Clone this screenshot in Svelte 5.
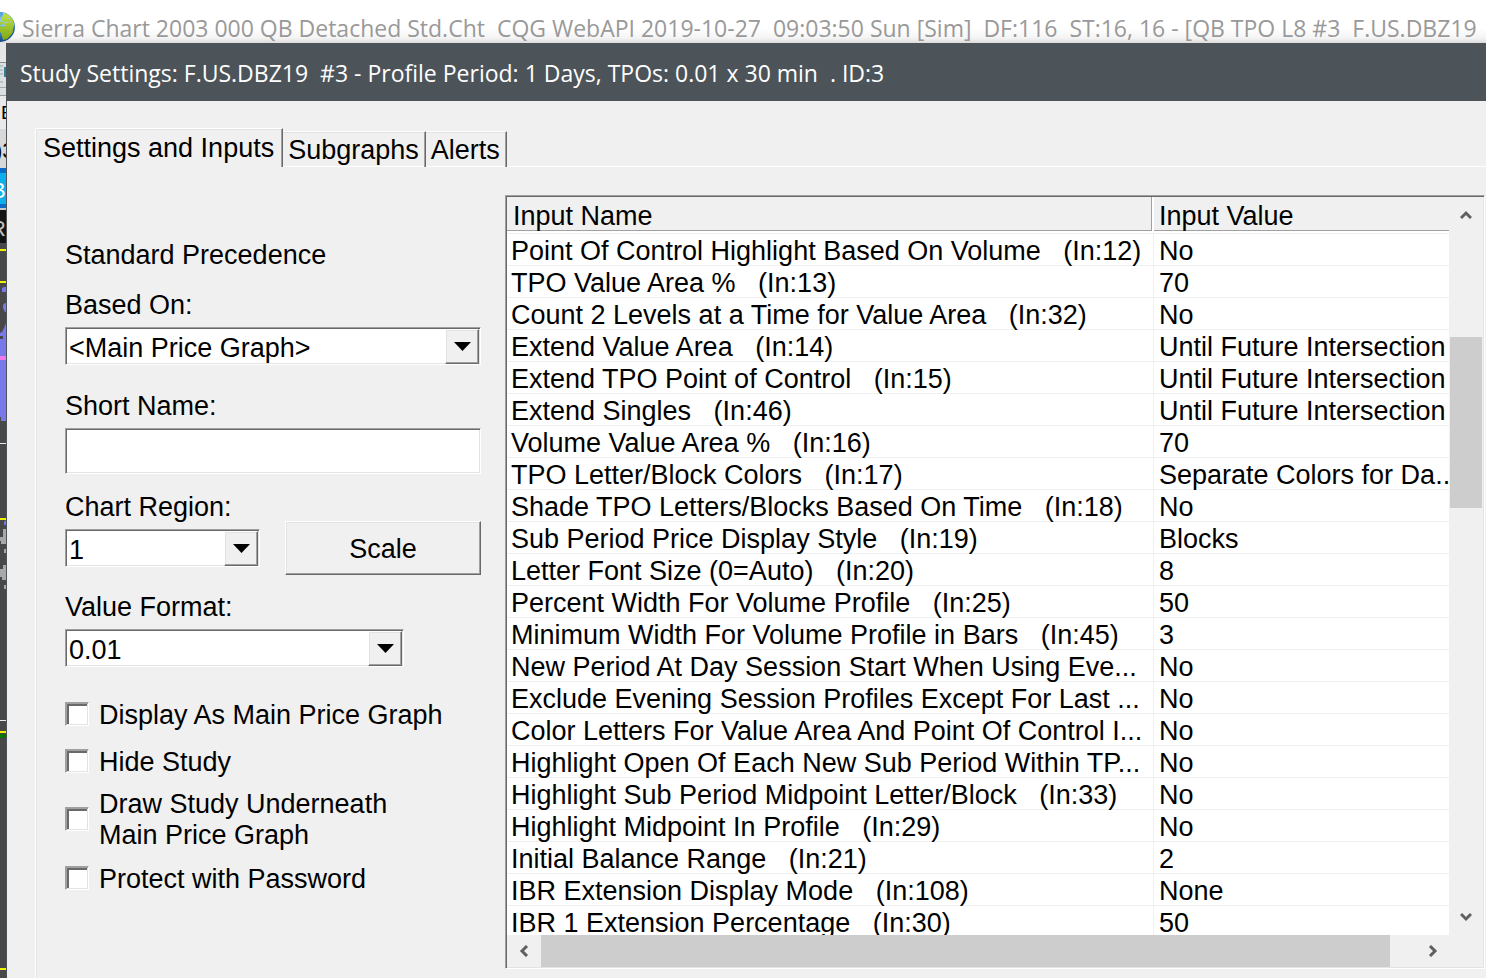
<script>
  const appTitle =
    'Sierra Chart 2003 000 QB Detached Std.Cht  CQG WebAPI 2019-10-27  09:03:50 Sun [Sim]  DF:116  ST:16, 16 - [QB TPO L8 #3  F.US.DBZ19';
  const dialogTitle =
    'Study Settings: F.US.DBZ19  #3 - Profile Period: 1 Days, TPOs: 0.01 x 30 min  . ID:3';

  const tabs = ['Settings and Inputs', 'Subgraphs', 'Alerts'];
  let activeTab = $state('Settings and Inputs');

  let basedOn = $state('<Main Price Graph>');
  let shortName = $state('');
  let region = $state('1');
  let valueFormat = $state('0.01');

  let options = $state([
    { label: 'Display As Main Price Graph', checked: false },
    { label: 'Hide Study', checked: false },
    { label: 'Draw Study Underneath\nMain Price Graph', checked: false },
    { label: 'Protect with Password', checked: false }
  ]);

  const inputs = [
    ['Point Of Control Highlight Based On Volume   (In:12)', 'No'],
    ['TPO Value Area %   (In:13)', '70'],
    ['Count 2 Levels at a Time for Value Area   (In:32)', 'No'],
    ['Extend Value Area   (In:14)', 'Until Future Intersection'],
    ['Extend TPO Point of Control   (In:15)', 'Until Future Intersection'],
    ['Extend Singles   (In:46)', 'Until Future Intersection'],
    ['Volume Value Area %   (In:16)', '70'],
    ['TPO Letter/Block Colors   (In:17)', 'Separate Colors for Da...'],
    ['Shade TPO Letters/Blocks Based On Time   (In:18)', 'No'],
    ['Sub Period Price Display Style   (In:19)', 'Blocks'],
    ['Letter Font Size (0=Auto)   (In:20)', '8'],
    ['Percent Width For Volume Profile   (In:25)', '50'],
    ['Minimum Width For Volume Profile in Bars   (In:45)', '3'],
    ['New Period At Day Session Start When Using Eve...', 'No'],
    ['Exclude Evening Session Profiles Except For Last ...', 'No'],
    ['Color Letters For Value Area And Point Of Control I...', 'No'],
    ['Highlight Open Of Each New Sub Period Within TP...', 'No'],
    ['Highlight Sub Period Midpoint Letter/Block   (In:33)', 'No'],
    ['Highlight Midpoint In Profile   (In:29)', 'No'],
    ['Initial Balance Range   (In:21)', '2'],
    ['IBR Extension Display Mode   (In:108)', 'None'],
    ['IBR 1 Extension Percentage   (In:30)', '50']
  ];
</script>

{#snippet dropArrow()}
  <span class="drop">
    <svg width="17" height="9" viewBox="0 0 17 9"><path d="M0 0H17L8.5 9Z" fill="#000" /></svg>
  </span>
{/snippet}

<div class="app">
  <header class="app-title">
    <svg class="globe" width="15" height="30" viewBox="0 0 15 30">
      <defs>
        <radialGradient id="sea" cx="0.55" cy="0.3" r="0.7">
          <stop offset="0" stop-color="#8fd0f5" />
          <stop offset="0.6" stop-color="#2f7fc8" />
          <stop offset="1" stop-color="#12407c" />
        </radialGradient>
        <linearGradient id="land" x1="0" y1="0" x2="0" y2="1">
          <stop offset="0" stop-color="#c4e04a" />
          <stop offset="1" stop-color="#7fa814" />
        </linearGradient>
      </defs>
      <circle cx="0" cy="15" r="15" fill="url(#sea)" />
      <path d="M3 1L6 1.5 10 4 13 8 14.3 13 13 17 12.5 21 9 25 7 27 3 28 2 24 1 21 0 20V14L3 15 5 14 3 12 0 13V10L2 8 1 6 3 4Z" fill="url(#land)" />
      <path d="M1 9L4 10M7 7L9 6.5M4 11L8 10.5M1 13L5 13.5M10 9V11" stroke="#8fd0f5" fill="none" />
    </svg>
    <span>{appTitle}</span>
  </header>

  <div class="workspace">
    <!-- sliver of the chart window behind the dialog -->
    <svg class="chart" width="6" height="935" viewBox="0 43 6 935">
      <rect y="43" width="6" height="19" fill="#e6e6e6" />
      <rect y="62" width="6" height="1" fill="#8c8c8c" />
      <rect y="63" width="6" height="32" fill="#dcdfe2" />
      <path d="M0 66H3M0 70H3M0 74H3M0 82H3" stroke="#9aa4ae" />
      <rect x="4" y="67" width="2" height="10" fill="#2f7f8f" />
      <rect y="87" width="6" height="1" fill="#a8a8a8" />
      <rect y="95" width="6" height="1" fill="#9a9a9a" />
      <rect y="96" width="6" height="33" fill="#e9e9e9" />
      <text x="1" y="119" font-size="19">E</text>
      <rect y="129" width="6" height="39" fill="#d8d8d8" />
      <text x="-5" y="158" font-size="22">)3</text>
      <rect y="168" width="6" height="40" fill="#0a6cc8" />
      <rect y="173" width="6" height="31" fill="#0cb0ec" />
      <text x="-9" y="198" font-size="22" fill="#fff">B</text>
      <rect y="208" width="6" height="2" fill="#c8c8c8" />
      <rect y="210" width="6" height="33" fill="#141414" />
      <text x="-10" y="236" font-size="22" fill="#c0c0c0">R</text>
      <rect y="243" width="6" height="735" fill="#484848" />
      <path d="M0 250H6M0 282H6M0 519H6M0 732H6M0 969H6" stroke="#f0f000" stroke-width="2" />
      <path d="M2 288L4 287H6V292H2ZM3 305L5 303H6V312H5L3 308ZM6 323L4 328L2 332L0 333V336H3V339H0V417H1V421H6ZM4 522L6 520V525H4Z" fill="#7878e8" />
      <rect y="356" width="6" height="4" fill="#f078e8" />
      <path d="M0 443.5H6M0 720.5H6" stroke="#e8e8e8" />
      <path d="M3 529H6V544H1V541H0V537H3ZM4 549H6V553H4ZM3 565H6V580H2V577H0V569H3ZM4 585H6V589H4Z" fill="#a8a8a8" />
      <rect y="734" width="6" height="4" fill="#007800" />
    </svg>

    <div class="dialog" role="dialog" aria-labelledby="dialog-title">
      <h1 id="dialog-title">{dialogTitle}</h1>

      <div class="tabs" role="tablist">
        {#each tabs as tab}
          <button
            role="tab"
            class="tab"
            class:active={tab === activeTab}
            aria-selected={tab === activeTab}
            onclick={() => (activeTab = tab)}>{tab}</button>
        {/each}
        <div class="tab-rule"></div>
      </div>

      <div class="panel" role="tabpanel">
        <form class="form" onsubmit={(e) => e.preventDefault()}>
          <p class="precedence">Standard Precedence</p>

          <div class="field">
            <label for="based-on">Based On:</label>
            <div class="combo">
              <select id="based-on" bind:value={basedOn}>
                <option>{'<Main Price Graph>'}</option>
              </select>
              {@render dropArrow()}
            </div>
          </div>

          <div class="field short-name">
            <label for="short-name">Short Name:</label>
            <input id="short-name" type="text" bind:value={shortName} />
          </div>

          <div class="region-row">
            <div class="field region">
              <label for="region">Chart Region:</label>
              <div class="combo">
                <select id="region" bind:value={region}>
                  <option>1</option>
                  <option>2</option>
                </select>
                {@render dropArrow()}
              </div>
            </div>
            <button type="button" class="scale">Scale</button>
          </div>

          <div class="field format">
            <label for="format">Value Format:</label>
            <div class="combo">
              <select id="format" bind:value={valueFormat}>
                <option>0.01</option>
                <option>0.001</option>
              </select>
              {@render dropArrow()}
            </div>
          </div>

          <div class="checks">
            {#each options as option}
              <label class="check">
                <input type="checkbox" bind:checked={option.checked} />
                <span>{option.label}</span>
              </label>
            {/each}
          </div>
        </form>

        <div class="list">
          <div class="viewport">
            <table>
              <colgroup>
                <col />
                <col class="value-col" />
              </colgroup>
              <thead>
                <tr>
                  <th><div class="head split">Input Name</div></th>
                  <th><div class="head">Input Value</div></th>
                </tr>
              </thead>
              <tbody>
                {#each inputs as [name, value]}
                  <tr>
                    <td>{name}</td>
                    <td>{value}</td>
                  </tr>
                {/each}
              </tbody>
            </table>
          </div>

          <div class="vbar">
            <button aria-label="Scroll up">
              <svg width="12" height="10" viewBox="0 0 12 10"><path d="M1 8L6 3L11 8" /></svg>
            </button>
            <div class="track"><div class="thumb"></div></div>
            <button aria-label="Scroll down">
              <svg width="12" height="10" viewBox="0 0 12 10"><path d="M1 2L6 7L11 2" /></svg>
            </button>
          </div>

          <div class="hbar">
            <button aria-label="Scroll left">
              <svg width="10" height="12" viewBox="0 0 10 12"><path d="M8 1L3 6L8 11" /></svg>
            </button>
            <div class="track"><div class="thumb"></div></div>
            <button aria-label="Scroll right">
              <svg width="10" height="12" viewBox="0 0 10 12"><path d="M2 1L7 6L2 11" /></svg>
            </button>
          </div>
        </div>
      </div>
    </div>
  </div>
</div>

<style>
  .app {
    display: flex;
    flex-direction: column;
    height: 100vh;
    overflow: hidden;
    background: #fff;
    color: #000;
    font-family: 'Liberation Sans', Arial, sans-serif;
    font-size: 27px;
    line-height: 30px;
  }

  button,
  select,
  input {
    font: inherit;
    color: inherit;
    margin: 0;
    box-sizing: border-box;
    border-radius: 0;
  }

  /* Main window title */
  .app-title {
    flex: none;
    display: flex;
    gap: 7px;
    height: 43px;
    padding-top: 12px;
    box-sizing: border-box;
    background: linear-gradient(#fff 28px, #f4f4f4 38px, #dcdcdc);
    color: #999;
    font-family: 'Open Sans', 'Noto Sans', sans-serif;
    font-size: 23px;
    line-height: 32px;
    white-space: pre;
  }

  .globe {
    flex: none;
  }

  .workspace {
    flex: 1;
    min-height: 0;
    display: flex;
    background: #484848;
  }

  .chart {
    flex: none;
    display: block;
  }

  .dialog {
    flex: 1;
    min-width: 0;
    display: flex;
    flex-direction: column;
    background: #f0f0f0;
    border-left: 1px solid #4c545a;
  }

  h1 {
    flex: none;
    margin: 0;
    padding: 15px 13px 13px;
    background: #4c545a;
    color: #fff;
    font-family: 'Open Sans', 'Noto Sans', sans-serif;
    font-size: 23px;
    font-weight: 400;
    white-space: pre;
  }

  /* Tabs */
  .tabs {
    flex: none;
    display: flex;
    align-items: flex-end;
    margin: 27px 0 0 28px;
  }

  .tab {
    height: 36px;
    padding: 0 6px 0 5px;
    border: 0;
    border-top: 1px solid #fff;
    border-right: 1px solid #696969;
    box-shadow: inset -1px 0 #a0a0a0, inset 0 1px #e3e3e3, inset 0 -1px #fff;
    background: none;
    white-space: nowrap;
  }

  .tab.active {
    height: 39px;
    padding: 0 8px 0 7px;
    border-left: 1px solid #fff;
    border-top-left-radius: 2px;
    box-shadow: inset -1px 0 #a0a0a0, inset 1px 1px #e3e3e3;
  }

  .tab-rule {
    flex: 1;
    border-bottom: 1px solid #fff;
  }

  .panel {
    flex: 1;
    min-height: 0;
    display: flex;
    gap: 24px;
    margin-left: 28px;
    padding: 28px 1px 9px 29px;
    border-left: 1px solid #fff;
    box-shadow: inset 1px 0 #e3e3e3;
  }

  /* Form on the left */
  .form {
    flex: none;
    width: 416px;
    padding-top: 45px;
  }

  .precedence {
    margin: 0 0 20px;
  }

  .field {
    display: flex;
    flex-direction: column;
    gap: 7px;
  }

  .short-name {
    margin-top: 26px;
  }

  .region-row {
    display: flex;
    justify-content: space-between;
    align-items: flex-end;
    min-height: 83px;
    margin: 18px 0 17px;
  }

  .region {
    width: 195px;
    align-self: flex-start;
  }

  .format {
    width: 339px;
  }

  .combo {
    display: grid;
  }

  .combo > :global(*) {
    grid-area: 1 / 1;
  }

  select,
  input[type='text'],
  input[type='checkbox'] {
    appearance: none;
    background: #fff;
    border: 1px solid;
    border-color: #a0a0a0 #fff #fff #a0a0a0;
    box-shadow: inset 1px 1px #696969, inset -1px -1px #e3e3e3;
    outline: none;
  }

  select {
    width: 100%;
    height: 38px;
    padding: 4px 36px 0 3px;
  }

  input[type='text'] {
    width: 100%;
    height: 46px;
    padding: 0 4px;
  }

  .drop,
  .scale {
    background: #f0f0f0;
    border: 1px solid;
    border-color: #fff #696969 #696969 #fff;
    box-shadow: inset -1px -1px #a0a0a0, inset 1px 1px #e3e3e3;
  }

  .drop {
    justify-self: end;
    display: flex;
    align-items: center;
    justify-content: center;
    width: 32px;
    margin: 2px 2px 1px;
    pointer-events: none;
  }

  .scale {
    width: 196px;
    height: 54px;
    padding-top: 2px;
  }

  .checks {
    margin-top: 33px;
    line-height: 31px;
  }

  .check {
    display: flex;
    align-items: center;
    gap: 10px;
    margin-bottom: 13px;
    white-space: pre;
  }

  .check:first-child {
    margin-bottom: 16px;
  }

  .check:nth-child(2) {
    margin-bottom: 11px;
  }

  .check input {
    flex: none;
    width: 24px;
    height: 24px;
    margin-bottom: 3px;
    box-shadow: inset 1px 1px #a0a0a0, inset -1px -1px #e3e3e3, inset 3px 3px #696969;
  }

  .check input:checked {
    background: #555;
  }

  /* Input list on the right */
  .list {
    flex: 1;
    min-width: 0;
    display: grid;
    grid-template-columns: minmax(0, 1fr) 33px;
    grid-template-rows: minmax(0, 1fr) 32px;
    border: 1px solid;
    border-color: #a0a0a0 #fff #fff #a0a0a0;
    box-shadow: inset 1px 1px #696969, inset -1px -1px #e3e3e3;
    box-sizing: border-box;
    padding: 1px;
    background: #f0f0f0;
  }

  .viewport {
    overflow: hidden;
    background: #fff;
    margin-right: 1px;
  }

  table {
    width: 100%;
    table-layout: fixed;
    border-collapse: separate;
    border-spacing: 0;
  }

  .value-col {
    width: 295px;
  }

  th {
    height: 36px;
    padding: 0;
    font-weight: 400;
    text-align: left;
    vertical-align: top;
    border-bottom: 1px solid #f0f0f0;
  }

  .head {
    height: 34px;
    padding: 4px 0 0 5px;
    box-sizing: border-box;
    background: #f0f0f0;
    border-bottom: 1px solid #a0a0a0;
  }

  .split {
    margin-right: 2px;
    padding-left: 6px;
    border-right: 1px solid #a0a0a0;
  }

  td {
    height: 32px;
    padding: 3px 0 0 4px;
    box-sizing: border-box;
    line-height: 28px;
    white-space: pre;
    border-bottom: 1px solid #f0f0f0;
    border-right: 1px solid #f0f0f0;
  }

  td:last-child {
    padding-left: 5px;
    border-right: 0;
  }

  .vbar,
  .hbar {
    display: flex;
  }

  .vbar {
    flex-direction: column;
    padding-right: 1px;
  }

  .vbar button,
  .hbar button {
    flex: none;
    display: flex;
    align-items: center;
    justify-content: center;
    width: 34px;
    padding: 0;
    border: 0;
    background: none;
  }

  .vbar button {
    width: 32px;
    height: 36px;
  }

  .list svg path {
    fill: none;
    stroke: #606060;
    stroke-width: 3;
  }

  .track {
    flex: 1;
    display: flex;
  }

  .vbar .track {
    flex-direction: column;
  }

  .thumb {
    background: #cdcdcd;
  }

  .vbar .thumb {
    height: 171px;
    margin-top: 104px;
  }

  .hbar .thumb {
    width: 97%;
  }
</style>
